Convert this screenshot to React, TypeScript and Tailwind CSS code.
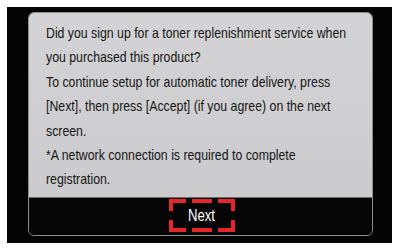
const lines = [
  "Did you sign up for a toner replenishment service when",
  "you purchased this product?",
  "To continue setup for automatic toner delivery, press",
  "[Next], then press [Accept] (if you agree) on the next",
  "screen.",
  "*A network connection is required to complete",
  "registration.",
];

function NextButton() {
  return (
    <div className="relative w-[66px] h-[33px] flex items-center justify-center">
      <svg
        className="absolute inset-0"
        width="66"
        height="33"
        viewBox="0 0 66 33"
        fill="none"
        stroke="#e3282b"
        strokeWidth="4"
      >
        <path d="M2 12V2H17" />
        <path d="M23 2H43" />
        <path d="M49 2H64V12" />
        <path d="M2 21V31H17" />
        <path d="M23 31H43" />
        <path d="M49 31H64V21" />
      </svg>
      <span className="relative text-white text-[16px] leading-none pt-[1px] scale-x-[0.82]">Next</span>
    </div>
  );
}

export default function App() {
  return (
    <div className="w-[400px] h-[250px] bg-white pt-[7px] pl-[7px] font-['Liberation_Sans',Arial,sans-serif]">
      <div className="w-[385px] h-[236px] bg-[#040404] pl-[21px] pr-[19px] pt-[5px] pb-[7px]">
        <div className="h-full flex flex-col rounded-[6px] border-[1.5px] border-[#8e8e8e] overflow-hidden">
          <div className="h-[184px] bg-gradient-to-b from-[#d3d2d4] to-[#cbcacc] pl-[17px] pt-[8px] text-[#161616] text-[15px] leading-[24.4px]">
            <div className="origin-left scale-x-[0.82]">
              {lines.map((l, i) => (
                <div key={i} className="whitespace-nowrap">
                  {l}
                </div>
              ))}
            </div>
          </div>
          <div className="flex-1 bg-[#070606] border-t border-[#6c6c6c] flex items-center justify-center pl-[2px] pb-[2px]">
            <NextButton />
          </div>
        </div>
      </div>
    </div>
  );
}
